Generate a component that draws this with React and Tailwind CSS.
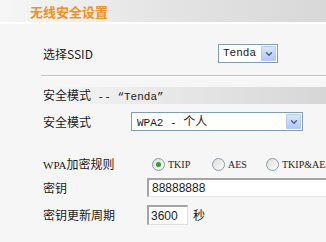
import { ChevronDown } from 'lucide-react';

function DropButton() {
    return (
        <div className="w-[15px] h-[15px] bg-gradient-to-b from-[#dbe6fd] to-[#b4c8f6] border border-[#b7c9f0] flex items-center justify-center rounded-[1px]">
            <ChevronDown className="w-[10px] h-[10px] text-[#4d6185]" strokeWidth={3.5} />
        </div>
    );
}

function Radio({ checked, label, width }) {
    return (
        <div className={`flex items-center shrink-0 ${width}`}>
            <div className="w-[13px] h-[13px] shrink-0 rounded-full border border-[#8a9aa8] bg-gradient-to-br from-[#dcdcd6] to-white flex items-center justify-center">
                {checked && <div className="w-[5px] h-[5px] rounded-full bg-[#27a327]" />}
            </div>
            <span className="ml-[3px] font-['Liberation_Serif'] text-[10px] text-[#222] whitespace-nowrap">{label}</span>
        </div>
    );
}

export default function App() {
    return (
        <div className="w-[326px] h-[242px] overflow-hidden bg-[#f6f6f6] font-['Noto_Sans_CJK_SC',sans-serif] text-[12px] text-[#1a1a1a]">
            {/* header */}
            <div className="h-[22px] bg-gradient-to-r from-[#f6f6f6] via-[#e4e4e4] to-[#d8d8d8] pl-[30px] flex items-center">
                <h1 className="text-[13px] font-bold text-[#f2901c] leading-none">无线安全设置</h1>
            </div>
            <div className="h-[2px] bg-white" />

            <div className="pl-[41px]">
                {/* ssid */}
                <div className="mt-[20px] h-[19px] flex items-center">
                    <span className="w-[177px] pl-[2px]">选择SSID</span>
                    <div className="w-[60px] h-[19px] bg-white border border-[#7f9db9] flex items-center justify-between pl-[4px] pr-[1px]">
                        <span className="font-['Liberation_Mono'] text-[11px] leading-none">Tenda</span>
                        <DropButton />
                    </div>
                </div>

                {/* separator */}
                <div className="mt-[12px] h-[1px] bg-[#c2c2bc]" />
                <div className="h-[1px] bg-white" />

                {/* band */}
                <div className="mt-[10px] h-[17px] bg-gradient-to-r from-[#f6f6f6] via-[#e6e6e6] to-[#d6d6d6] flex items-center pl-[2px]">
                    <span>安全模式<span className="font-['Liberation_Mono'] text-[11px]"> -- “Tenda”</span></span>
                </div>

                {/* mode */}
                <div className="mt-[8px] h-[19px] flex items-center">
                    <span className="w-[90px] pl-[2px]">安全模式</span>
                    <div className="w-[172px] h-[19px] bg-white border border-[#7f9db9] flex items-center justify-between pl-[5px] pr-[1px]">
                        <span className="leading-none"><span className="font-['Liberation_Mono'] text-[11px]">WPA2 - </span>个人</span>
                        <DropButton />
                    </div>
                </div>

                {/* cipher */}
                <div className="mt-[26px] h-[14px] flex items-center">
                    <span className="w-[111px] shrink-0 pl-[2px]"><span className="font-['Liberation_Serif'] text-[11px]">WPA</span>加密规则</span>
                    <Radio checked label="TKIP" width="w-[60px]" />
                    <Radio label="AES" width="w-[54px]" />
                    <Radio label="TKIP&AES" width="w-[60px]" />
                </div>

                {/* key */}
                <div className="mt-[7px] h-[19px] flex items-center">
                    <span className="w-[106px] pl-[2px]">密钥</span>
                    <div className="flex-1 h-[19px] bg-white border-t-2 border-l-2 border-[#a5a5a5] border-r-0 border-b border-b-[#e8e8e8] flex items-center pl-[3px]">
                        <span className="font-['Liberation_Sans'] text-[12px] leading-none">88888888</span>
                    </div>
                </div>

                {/* period */}
                <div className="mt-[8px] h-[20px] flex items-center">
                    <span className="w-[106px] pl-[2px]">密钥更新周期</span>
                    <div className="w-[41px] h-[20px] bg-white border-t-2 border-l-2 border-[#a5a5a5] border-r border-b border-r-[#e0e0e0] border-b-[#e0e0e0] flex items-center pl-[2px]">
                        <span className="font-['Liberation_Sans'] text-[12px] leading-none">3600</span>
                    </div>
                    <span className="ml-[5px]">秒</span>
                </div>
            </div>
        </div>
    );
}
